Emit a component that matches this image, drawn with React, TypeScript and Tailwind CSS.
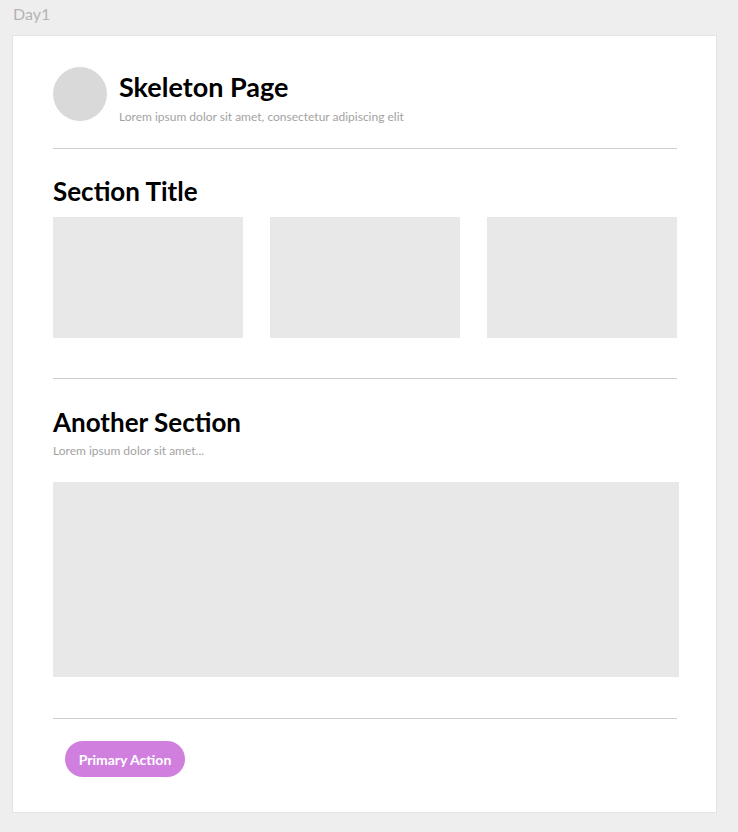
import React from "react";

const font = { fontFamily: '"Lato", "Noto Sans", sans-serif' };

const Divider = ({ className = "" }: { className?: string }) => (
  <div className={`h-px bg-[#cfcfcf] ${className}`} />
);

export default function App() {
  return (
    <div className="h-[832px] w-full overflow-hidden bg-[#eeeeee]" style={font}>
      <div className="px-[13px] pt-[4px] text-[16px] leading-[20px] text-[#b4b4b4]">Day1</div>
      <div className="ml-[12px] mt-[11px] h-[778px] w-[705px] border border-[#e2e2e2] bg-white pl-[40px] pr-[39px] pt-[31px]">
        {/* header */}
        <div className="flex items-start gap-[12px]">
          <div className="h-[54px] w-[54px] shrink-0 rounded-full bg-[#d9d9d9]" />
          <div className="pt-[4px]">
            <h1 className="text-[27px] font-bold leading-[32px] text-black">Skeleton Page</h1>
            <p className="mt-[7px] text-[12px] leading-[14px] text-[#a3a3a3]">
              Lorem ipsum dolor sit amet, consectetur adipiscing elit
            </p>
          </div>
        </div>
        <Divider className="mt-[24px]" />

        {/* section one */}
        <h2 className="mt-[27px] text-[26px] font-bold leading-[30px] text-black">Section Title</h2>
        <div className="mt-[11px] grid grid-cols-3 gap-[27px]">
          <div className="h-[121px] bg-[#e8e8e8]" />
          <div className="h-[121px] bg-[#e8e8e8]" />
          <div className="h-[121px] bg-[#e8e8e8]" />
        </div>
        <Divider className="mt-[40px]" />

        {/* section two */}
        <h2 className="mt-[28px] text-[26px] font-bold leading-[30px] text-black">Another Section</h2>
        <p className="mt-[7px] text-[12px] leading-[14px] text-[#a3a3a3]">Lorem ipsum dolor sit amet...</p>
        <div className="mt-[24px] h-[195px] w-[626px] bg-[#e8e8e8]" />
        <Divider className="mt-[41px]" />

        {/* footer */}
        <button className="ml-[12px] mt-[22px] h-[36px] w-[120px] rounded-full bg-[#d17fdf] text-[14px] font-bold text-white">
          Primary Action
        </button>
      </div>
    </div>
  );
}
